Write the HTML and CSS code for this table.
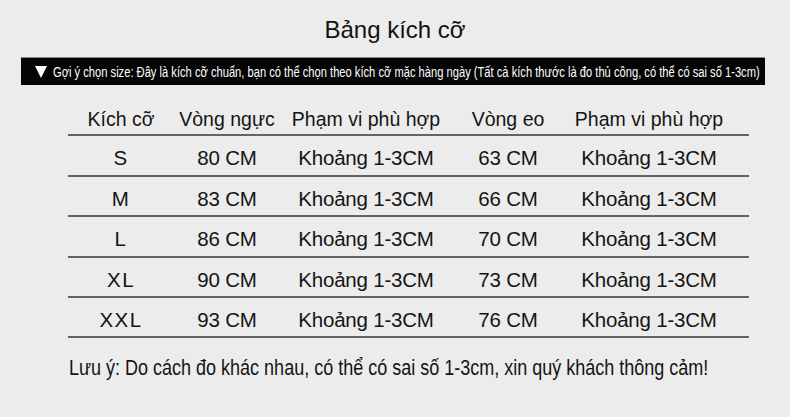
FILE: index.html
```html
<!DOCTYPE html>
<html lang="vi">
<head>
<meta charset="utf-8">
<title>Bảng kích cỡ</title>
<link rel="stylesheet" href="styles.css">
</head>
<body>
<div class="page">
  <h1 class="title">Bảng kích cỡ</h1>
  <div class="hint">
    <span class="tri"></span>
    <span class="hint-text">Gợi ý chọn size: Đây là kích cỡ chuẩn, bạn có thể chọn theo kích cỡ mặc hàng ngày (Tất cả kích thước là đo thủ công, có thể có sai số 1-3cm)</span>
  </div>
  <div class="table">
    <div class="row head">
      <div>Kích cỡ</div><div>Vòng ngực</div><div>Phạm vi phù hợp</div><div>Vòng eo</div><div>Phạm vi phù hợp</div>
    </div>
    <div class="row">
      <div class="size">S</div><div>80 CM</div><div>Khoảng 1-3CM</div><div>63 CM</div><div>Khoảng 1-3CM</div>
    </div>
    <div class="row">
      <div class="size">M</div><div>83 CM</div><div>Khoảng 1-3CM</div><div>66 CM</div><div>Khoảng 1-3CM</div>
    </div>
    <div class="row">
      <div class="size">L</div><div>86 CM</div><div>Khoảng 1-3CM</div><div>70 CM</div><div>Khoảng 1-3CM</div>
    </div>
    <div class="row">
      <div class="size">XL</div><div>90 CM</div><div>Khoảng 1-3CM</div><div>73 CM</div><div>Khoảng 1-3CM</div>
    </div>
    <div class="row">
      <div class="size">XXL</div><div>93 CM</div><div>Khoảng 1-3CM</div><div>76 CM</div><div>Khoảng 1-3CM</div>
    </div>
  </div>
  <div class="note-wrap">
    <p class="note">Lưu ý: Do cách đo khác nhau, có thể có sai số 1-3cm, xin quý khách thông cảm!</p>
  </div>
</div>
</body>
</html>
```
FILE: styles.css
```css
html, body {
  margin: 0;
  padding: 0;
}
body {
  background: #ececec;
  color: #141414;
  font-family: "Liberation Sans", Arial, sans-serif;
  width: 790px;
  height: 417px;
  overflow: hidden;
}
.page {
  display: flex;
  flex-direction: column;
}
.title {
  margin: 0;
  padding-top: 16px;
  font-size: 24px;
  line-height: 28px;
  font-weight: normal;
  text-align: center;
  color: #111;
}
.hint {
  margin: 13px 25px 0 21px;
  height: 28px;
  background: #050505;
  border-top: 1px solid #8a8a8a;
  box-sizing: border-box;
  display: flex;
  align-items: center;
  padding-left: 14px;
  color: #fff;
  font-size: 15.5px;
  white-space: nowrap;
  overflow: hidden;
}
.tri {
  flex: none;
  width: 0;
  height: 0;
  border-left: 6px solid transparent;
  border-right: 6px solid transparent;
  border-top: 12px solid #fff;
  margin-right: 6px;
}
.hint-text {
  display: inline-block;
  transform: scaleX(0.72);
  transform-origin: left center;
}
.table {
  margin: 11px 0 0 68px;
  width: 681px;
}
.row {
  display: grid;
  grid-template-columns: 106px 106px 172px 112px 170px;
  border-bottom: 2px solid #636363;
  text-align: center;
  font-size: 20.5px;
  line-height: 23px;
  padding: 10px 0 5.4px;
  letter-spacing: -0.2px;
}
.row.head {
  font-size: 19.5px;
  line-height: 22px;
  padding: 12.4px 0 4px;
  letter-spacing: 0;
}
.size {
  letter-spacing: 1.5px;
}
.note-wrap {
  margin: 18px 0 0 69px;
  overflow: hidden;
}
.note {
  margin: 0;
  display: inline-block;
  white-space: nowrap;
  font-size: 22px;
  line-height: 24px;
  transform: scaleX(0.818);
  transform-origin: left center;
}
```
